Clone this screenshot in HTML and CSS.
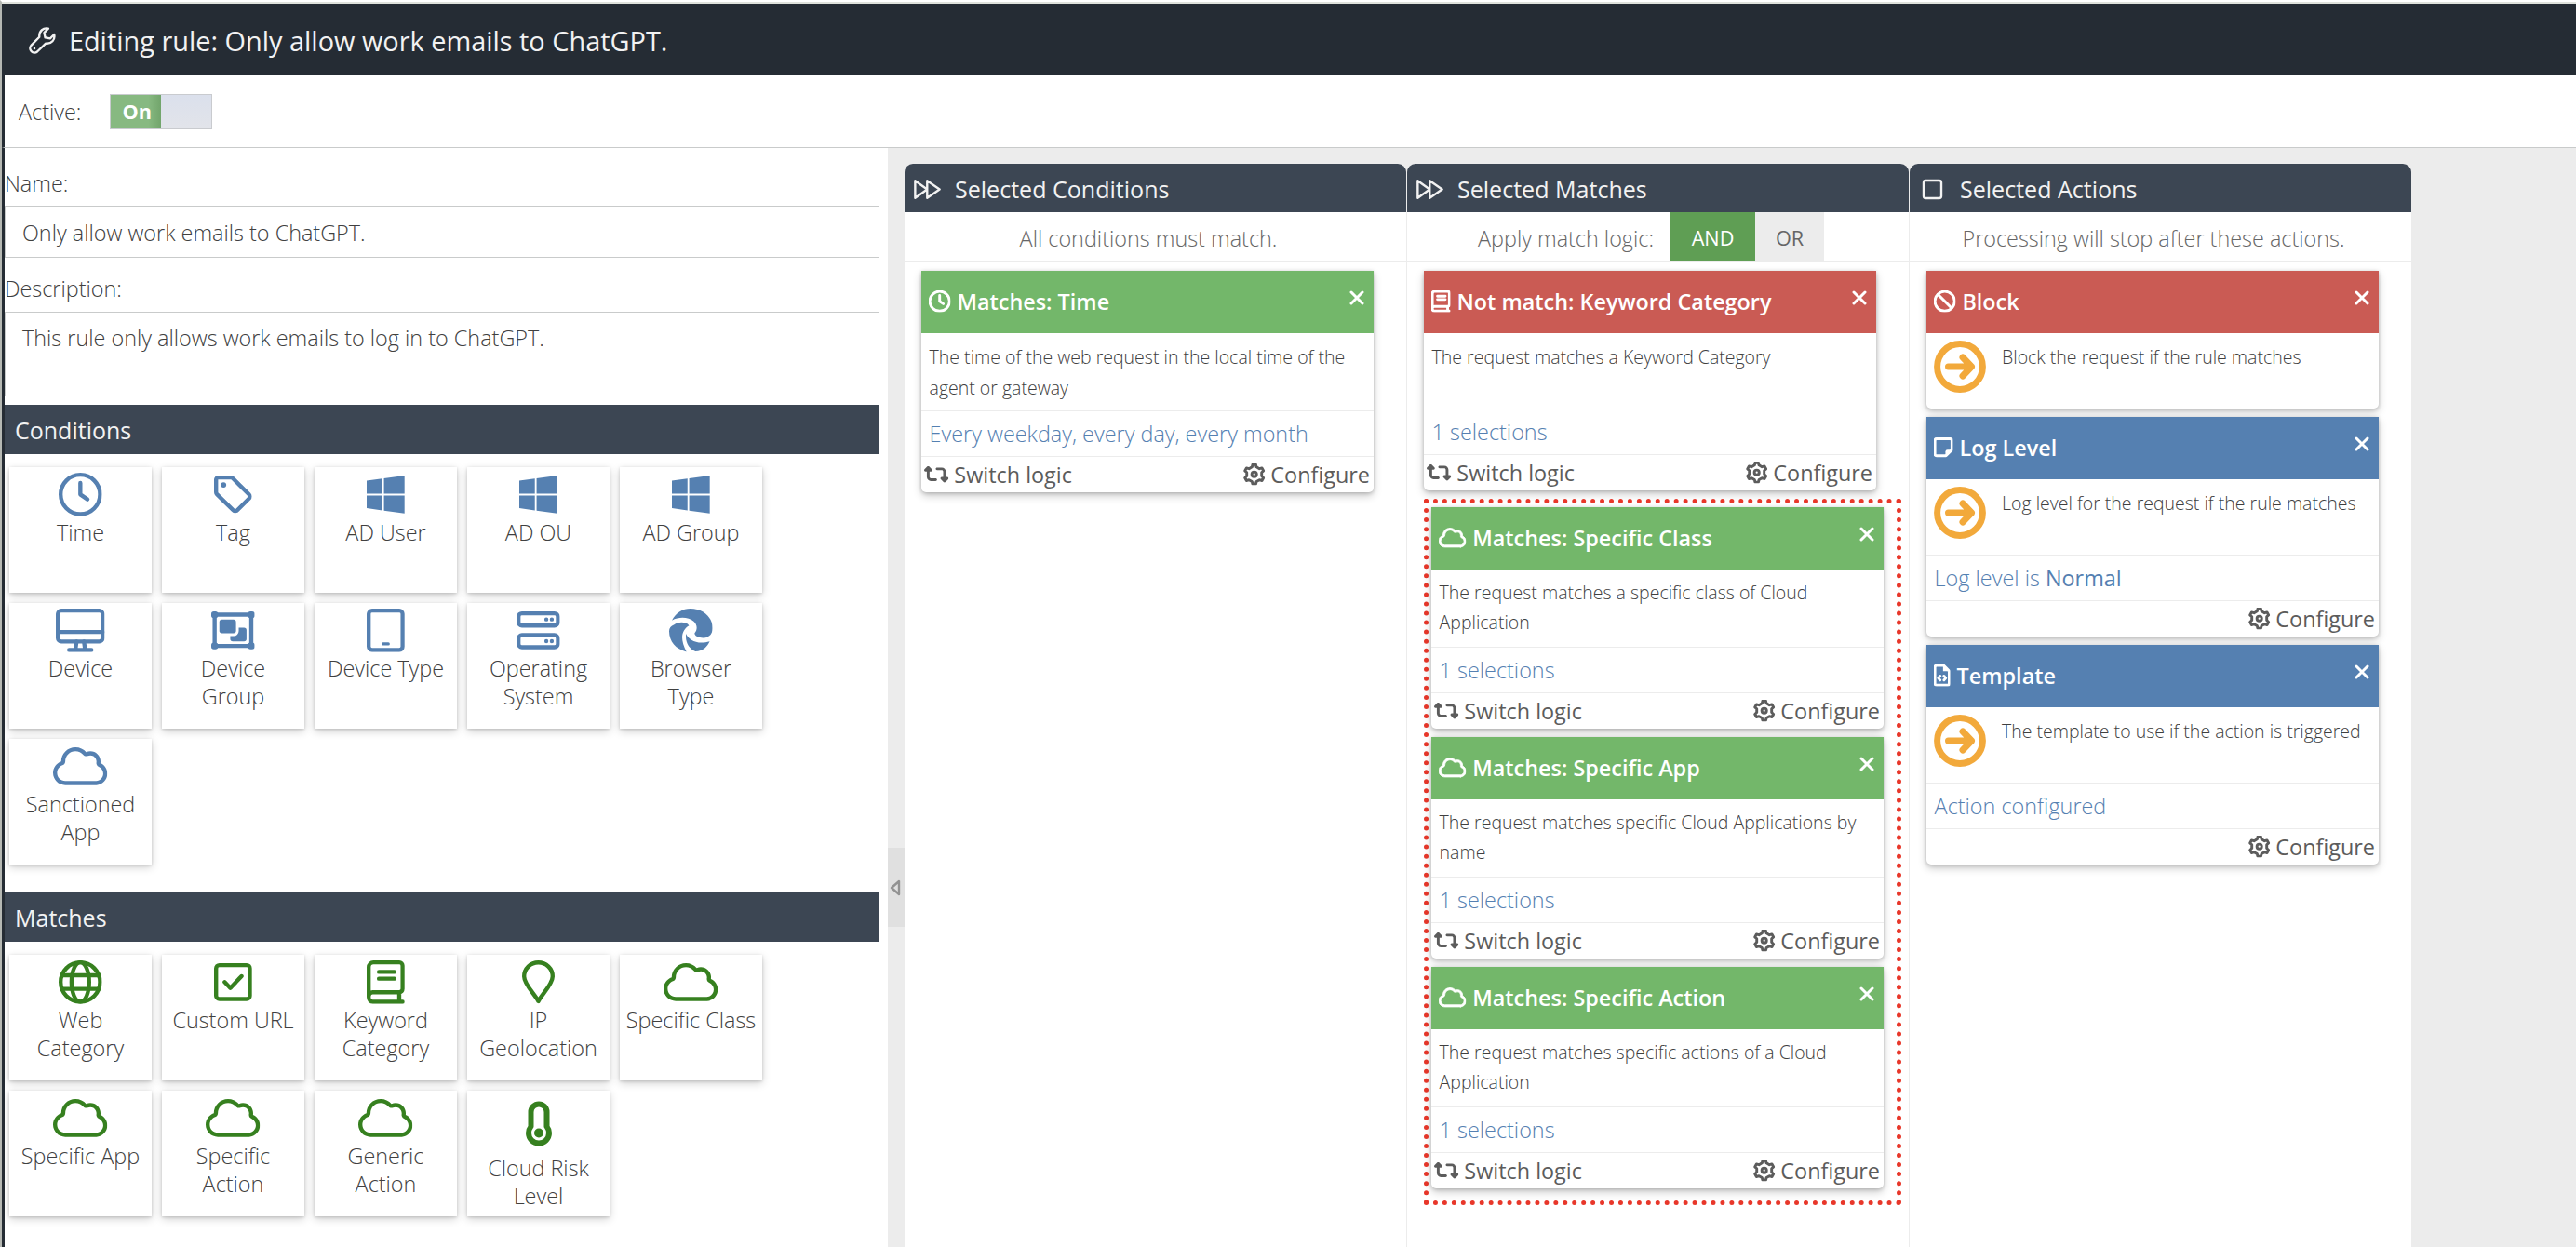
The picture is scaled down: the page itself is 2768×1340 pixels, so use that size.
FILE: index.html
```html
<!doctype html>
<html lang="en">
<head>
    <meta charset="UTF-8">
    <meta name="viewport" content="width=device-width, initial-scale=1.0">
    <title>Editing rule</title>
    <link rel="stylesheet" href="styles.css">
</head>
<body>

<svg class="sprite">
    <symbol id="i-wrench" viewBox="0 0 512 512"><path d="M370 30C280 5 190 75 200 190L42 352a84 84 0 0 0 118 118L322 312C430 330 505 240 482 142L405 218L310 200L292 108Z"/><circle class="solid" cx="106" cy="408" r="22"/></symbol>
    <symbol id="i-clock" viewBox="0 0 512 512"><circle cx="256" cy="256" r="232"/><path d="M256 120v136l85 58"/></symbol>
    <symbol id="i-tag" viewBox="0 0 448 512"><path d="M24 80a24 24 0 0 1 24-24h150c9 0 17 3 24 10l190 190a34 34 0 0 1 0 48L274 442a34 34 0 0 1-48 0L34 254a34 34 0 0 1-10-24z"/><circle class="solid" cx="112" cy="144" r="32"/></symbol>
    <symbol id="i-windows" viewBox="0 0 448 512"><path class="solid" d="M0 93.7l183.6-25.3v177.4H0V93.7zm0 324.6l183.6 25.3V268.4H0v149.9zm203.8 28L448 480V268.4H203.8v177.9zm0-380.6v180.1H448V32L203.8 65.7z"/></symbol>
    <symbol id="i-desktop" viewBox="0 0 576 512"><rect x="24" y="24" width="528" height="364" rx="40"/><path d="M24 276h528M244 390l-12 90M332 390l12 90M156 488h264"/></symbol>
    <symbol id="i-group" viewBox="0 0 512 512"><rect x="40" y="72" width="432" height="368"/><path class="solid" d="M0 62a30 30 0 0 1 30-30h20a30 30 0 0 1 30 30v20a30 30 0 0 1-30 30H30A30 30 0 0 1 0 82zM432 62a30 30 0 0 1 30-30h20a30 30 0 0 1 30 30v20a30 30 0 0 1-30 30h-20a30 30 0 0 1-30-30zM0 430a30 30 0 0 1 30-30h20a30 30 0 0 1 30 30v20a30 30 0 0 1-30 30H30a30 30 0 0 1-30-30zM432 430a30 30 0 0 1 30-30h20a30 30 0 0 1 30 30v20a30 30 0 0 1-30 30h-20a30 30 0 0 1-30-30z"/><rect class="solid" x="96" y="128" width="196" height="164" rx="30"/><path class="solid" d="M324 224h62a30 30 0 0 1 30 30v102a30 30 0 0 1-30 30H254a30 30 0 0 1-30-30v-32h40a60 60 0 0 0 60-60z"/></symbol>
    <symbol id="i-tablet" viewBox="0 0 448 512"><rect x="24" y="24" width="400" height="464" rx="40"/><path class="thin" d="M192 416h64"/></symbol>
    <symbol id="i-server" viewBox="0 0 512 512"><rect x="24" y="56" width="464" height="144" rx="40"/><rect x="24" y="312" width="464" height="144" rx="40"/><path class="solid" d="M328 128a24 24 0 1 0 48 0 24 24 0 1 0-48 0zM392 128a24 24 0 1 0 48 0 24 24 0 1 0-48 0zM328 384a24 24 0 1 0 48 0 24 24 0 1 0-48 0zM392 384a24 24 0 1 0 48 0 24 24 0 1 0-48 0z"/></symbol>
    <symbol id="i-browser" viewBox="0 0 512 512"><path class="solid" d="M33 139C80 50 160 0 250 0C400 0 512 100 512 230C512 300 470 345 400 345C350 345 298 325 300 290C335 250 335 190 290 150C230 100 120 90 33 139ZM60 190C100 155 200 150 235 200C150 250 120 350 205 510C80 480 0 390 0 267C0 230 20 205 60 190ZM200 296C230 370 330 430 478 388C450 450 400 505 310 505C240 480 185 400 200 296Z"/></symbol>
    <symbol id="i-cloud" viewBox="0 0 640 512"><path class="cloud" d="M354.9 121.7c13.8 16 36.5 21.1 55.9 12.5c8.9-3.9 18.7-6.2 29.2-6.2c39.8 0 72 32.2 72 72c0 4-.3 7.9-.9 11.7c-3.5 21.6 8.1 42.9 28.1 51.7C570.4 276.9 592 308 592 344c0 46.8-36.6 85.2-82.8 87.8c-.6 0-1.3 .1-1.9 .2H504 144c-53 0-96-43-96-96c0-41.7 26.6-77.3 64-90.5c19.2-6.8 32-24.9 32-45.3l0-.2v0 0c0-66.3 53.7-120 120-120c36.3 0 68.8 16.1 90.9 41.7zM512 480v-.2c71.4-4.1 128-63.3 128-135.8c0-55.7-33.5-103.7-81.5-124.7c1-6.3 1.5-12.8 1.5-19.3c0-66.3-53.7-120-120-120c-17.4 0-33.8 3.7-48.7 10.3C360.4 54.6 314.9 32 264 32C171.2 32 96 107.2 96 200l0 .2C40.1 220 0 273.3 0 336c0 79.5 64.5 144 144 144H464h40 8z"/></symbol>
    <symbol id="i-globe" viewBox="0 0 512 512"><circle cx="256" cy="256" r="232"/><ellipse cx="256" cy="256" rx="104" ry="232"/><path d="M40 176h432M40 336h432"/></symbol>
    <symbol id="i-check" viewBox="0 0 448 512"><rect x="24" y="56" width="400" height="400" rx="40"/><path d="M125 256l67 70 132-140"/></symbol>
    <symbol id="i-book" viewBox="0 0 448 512"><path d="M24 424V80a56 56 0 0 1 56-56h304a40 40 0 0 1 40 40v272a40 40 0 0 1-40 40H72a48 56 0 0 0 0 112h352M384 376v112M144 136h184M144 216h184"/></symbol>
    <symbol id="i-pin" viewBox="0 0 384 512"><path d="M192 482C150 400 24 280 24 188a168 164 0 0 1 336 0C360 280 234 400 192 482Z"/></symbol>
    <symbol id="i-temp" viewBox="0 0 28 48"><path class="temp" d="M5.5 11.5a8.5 8.5 0 0 1 17 0V27c1.6 2 2.5 4.3 2.5 7a11 11 0 0 1-22 0c0-2.7.9-5 2.5-7z"/><circle class="solid" cx="14" cy="34" r="5"/></symbol>
    <symbol id="i-forward" viewBox="0 0 512 512"><path d="M24 92v328l228-164zM252 92v328l236-164z"/></symbol>
    <symbol id="i-stop" viewBox="0 0 512 512"><rect x="88" y="88" width="336" height="336" rx="40"/></symbol>
    <symbol id="i-switch" viewBox="0 0 576 512"><path class="solid" d="M272 416c17.7 0 32-14.3 32-32s-14.3-32-32-32H160c-17.7 0-32-14.3-32-32V192h32c12.9 0 24.6-7.8 29.6-19.8s2.2-25.7-6.9-34.9l-64-64c-12.5-12.5-32.8-12.5-45.3 0l-64 64c-9.2 9.2-11.9 22.9-6.9 34.9s16.6 19.8 29.6 19.8l32 0 0 128c0 53 43 96 96 96l112 0zM304 96c-17.7 0-32 14.3-32 32s14.3 32 32 32l112 0c17.7 0 32 14.3 32 32l0 128-32 0c-12.9 0-24.6 7.8-29.6 19.8s-2.2 25.7 6.9 34.9l64 64c12.5 12.5 32.8 12.5 45.3 0l64-64c9.2-9.2 11.9-22.9 6.9-34.9s-16.6-19.8-29.6-19.8l-32 0V192c0-53-43-96-96-96L304 96z"/></symbol>
    <symbol id="i-gear" viewBox="0 0 512 512"><path d="M218 28L294 28L308 84L379 125L438 107L474 173L431 215L431 297L474 339L438 405L379 387L308 428L294 484L218 484L204 428L133 387L74 405L38 339L81 297L81 215L38 173L74 107L133 125L204 84Z"/><circle cx="256" cy="256" r="56"/></symbol>
    <symbol id="i-ban" viewBox="0 0 512 512"><circle cx="256" cy="256" r="232"/><path d="M96 96l320 320"/></symbol>
    <symbol id="i-note" viewBox="0 0 448 512"><path d="M24 96a40 40 0 0 1 40-40h320a40 40 0 0 1 40 40v220L284 456H64a40 40 0 0 1-40-40z"/><path class="solid" d="M272 470v-110a48 48 0 0 1 48-48h118L290 464z"/></symbol>
    <symbol id="i-file" viewBox="0 0 384 512"><path d="M24 64a40 40 0 0 1 40-40h166l130 130v294a40 40 0 0 1-40 40H64a40 40 0 0 1-40-40zM146 272l-40 48 40 48M238 272l40 48-40 48"/><path class="solid" d="M216 10v150h150z"/></symbol>
    <symbol id="i-arrow" viewBox="0 0 56 56"><g class="arrow"><circle cx="28" cy="28" r="24.4"/><path d="M15.5 28h25M31 18l9.5 10L31 38"/></g></symbol>
    <symbol id="i-close" viewBox="0 0 16 16"><path class="cross" d="M2 2l12 12M14 2L2 14"/></symbol>
    <symbol id="i-collapse" viewBox="0 0 12 18"><path class="collapse" d="M10 2v14L2 9z"/></symbol>
</svg>

<div class="page">
    <header class="title-bar">
        <svg class="icon"><use href="#i-wrench"/></svg>
        <span>Editing rule: Only allow work emails to ChatGPT.</span>
    </header>

    <div class="toolbar">
        <span>Active:</span>
        <div class="toggle"><span class="toggle-on">On</span></div>
    </div>

    <main class="editor">
        <section class="sidebar">
            <label for="name">Name:</label>
            <div class="field" id="name">Only allow work emails to ChatGPT.</div>
            <label for="description">Description:</label>
            <div class="field area" id="description">This rule only allows work emails to log in to ChatGPT.</div>

            <h2>Conditions</h2>
            <div class="tiles blue">
                <div class="tile"><svg class="icon"><use href="#i-clock"/></svg>Time</div>
                <div class="tile"><svg class="icon w448"><use href="#i-tag"/></svg>Tag</div>
                <div class="tile"><svg class="icon w448"><use href="#i-windows"/></svg>AD User</div>
                <div class="tile"><svg class="icon w448"><use href="#i-windows"/></svg>AD OU</div>
                <div class="tile"><svg class="icon w448"><use href="#i-windows"/></svg>AD Group</div>
                <div class="tile"><svg class="icon w576"><use href="#i-desktop"/></svg>Device</div>
                <div class="tile"><svg class="icon"><use href="#i-group"/></svg>Device<br>Group</div>
                <div class="tile"><svg class="icon w448"><use href="#i-tablet"/></svg>Device Type</div>
                <div class="tile"><svg class="icon"><use href="#i-server"/></svg>Operating<br>System</div>
                <div class="tile"><svg class="icon"><use href="#i-browser"/></svg>Browser<br>Type</div>
                <div class="tile"><svg class="icon w640"><use href="#i-cloud"/></svg>Sanctioned<br>App</div>
            </div>

            <h2>Matches</h2>
            <div class="tiles green">
                <div class="tile"><svg class="icon"><use href="#i-globe"/></svg>Web<br>Category</div>
                <div class="tile"><svg class="icon w448"><use href="#i-check"/></svg>Custom URL</div>
                <div class="tile"><svg class="icon w448"><use href="#i-book"/></svg>Keyword<br>Category</div>
                <div class="tile"><svg class="icon w384"><use href="#i-pin"/></svg>IP<br>Geolocation</div>
                <div class="tile"><svg class="icon w640"><use href="#i-cloud"/></svg>Specific Class</div>
                <div class="tile"><svg class="icon w640"><use href="#i-cloud"/></svg>Specific App</div>
                <div class="tile"><svg class="icon w640"><use href="#i-cloud"/></svg>Specific<br>Action</div>
                <div class="tile"><svg class="icon w640"><use href="#i-cloud"/></svg>Generic<br>Action</div>
                <div class="tile"><svg class="icon temperature"><use href="#i-temp"/></svg>Cloud Risk<br>Level</div>
            </div>
        </section>

        <div class="splitter">
            <div class="splitter-handle"><svg><use href="#i-collapse"/></svg></div>
        </div>

        <section class="column">
            <h3><svg class="icon"><use href="#i-forward"/></svg>Selected Conditions</h3>
            <div class="hint">All conditions must match.</div>
            <div class="cards">
                <article class="card match">
                    <h4><svg class="icon"><use href="#i-clock"/></svg>Matches: Time<svg class="close"><use href="#i-close"/></svg></h4>
                    <p>The time of the web request in the local time of the agent or gateway</p>
                    <div class="value">Every weekday, every day, every month</div>
                    <footer><span><svg class="icon w576"><use href="#i-switch"/></svg>Switch logic</span><span><svg class="icon"><use href="#i-gear"/></svg>Configure</span></footer>
                </article>
            </div>
        </section>

        <section class="column">
            <h3><svg class="icon"><use href="#i-forward"/></svg>Selected Matches</h3>
            <div class="hint">Apply match logic:<span class="logic and">AND</span><span class="logic or">OR</span></div>
            <div class="cards">
                <article class="card not-match">
                    <h4><svg class="icon w448"><use href="#i-book"/></svg>Not match: Keyword Category<svg class="close"><use href="#i-close"/></svg></h4>
                    <p>The request matches a Keyword Category</p>
                    <div class="value">1 selections</div>
                    <footer><span><svg class="icon w576"><use href="#i-switch"/></svg>Switch logic</span><span><svg class="icon"><use href="#i-gear"/></svg>Configure</span></footer>
                </article>
                <div class="highlight">
                    <article class="card match">
                        <h4><svg class="icon w640"><use href="#i-cloud"/></svg>Matches: Specific Class<svg class="close"><use href="#i-close"/></svg></h4>
                        <p>The request matches a specific class of Cloud Application</p>
                        <div class="value">1 selections</div>
                        <footer><span><svg class="icon w576"><use href="#i-switch"/></svg>Switch logic</span><span><svg class="icon"><use href="#i-gear"/></svg>Configure</span></footer>
                    </article>
                    <article class="card match">
                        <h4><svg class="icon w640"><use href="#i-cloud"/></svg>Matches: Specific App<svg class="close"><use href="#i-close"/></svg></h4>
                        <p>The request matches specific Cloud Applications by name</p>
                        <div class="value">1 selections</div>
                        <footer><span><svg class="icon w576"><use href="#i-switch"/></svg>Switch logic</span><span><svg class="icon"><use href="#i-gear"/></svg>Configure</span></footer>
                    </article>
                    <article class="card match">
                        <h4><svg class="icon w640"><use href="#i-cloud"/></svg>Matches: Specific Action<svg class="close"><use href="#i-close"/></svg></h4>
                        <p>The request matches specific actions of a Cloud Application</p>
                        <div class="value">1 selections</div>
                        <footer><span><svg class="icon w576"><use href="#i-switch"/></svg>Switch logic</span><span><svg class="icon"><use href="#i-gear"/></svg>Configure</span></footer>
                    </article>
                </div>
            </div>
        </section>

        <section class="column">
            <h3><svg class="icon"><use href="#i-stop"/></svg>Selected Actions</h3>
            <div class="hint">Processing will stop after these actions.</div>
            <div class="cards">
                <article class="card not-match">
                    <h4><svg class="icon"><use href="#i-ban"/></svg>Block<svg class="close"><use href="#i-close"/></svg></h4>
                    <p class="action"><svg><use href="#i-arrow"/></svg>Block the request if the rule matches</p>
                </article>
                <article class="card option">
                    <h4><svg class="icon w448"><use href="#i-note"/></svg>Log Level<svg class="close"><use href="#i-close"/></svg></h4>
                    <p class="action"><svg><use href="#i-arrow"/></svg>Log level for the request if the rule matches</p>
                    <div class="value">Log level is <b>Normal</b></div>
                    <footer><span></span><span><svg class="icon"><use href="#i-gear"/></svg>Configure</span></footer>
                </article>
                <article class="card option">
                    <h4><svg class="icon w384"><use href="#i-file"/></svg>Template<svg class="close"><use href="#i-close"/></svg></h4>
                    <p class="action"><svg><use href="#i-arrow"/></svg>The template to use if the action is triggered</p>
                    <div class="value">Action configured</div>
                    <footer><span></span><span><svg class="icon"><use href="#i-gear"/></svg>Configure</span></footer>
                </article>
            </div>
        </section>
    </main>
</div>
</body>
</html>
```

FILE: styles.css
```css
* {
    box-sizing: border-box;
}

body {
    margin: 0;
    height: 1340px;
    overflow: hidden;
    background-color: #ececec;
    font-family: "Open Sans", sans-serif;
    font-size: 23.4px;
    font-weight: 300;
    line-height: 30px;
    color: #404040;
}

h2, h3, h4, p {
    margin: 0;
    font-weight: 400;
}

/* icons */
.sprite {
    display: none;
}

.icon {
    width: 1em;
    height: 1em;
    flex: none;
    fill: none;
    stroke: currentColor;
    stroke-width: 48;
    stroke-linecap: round;
    stroke-linejoin: round;
}

.w384 { width: .75em; }
.w448 { width: .875em; }
.w576 { width: 1.125em; }
.w640 { width: 1.25em; }

.solid {
    fill: currentColor;
    stroke: none;
}

.cloud {
    fill: currentColor;
    stroke-width: var(--cloud-stroke, 0);
}

.thin {
    stroke-width: 34;
}

.temp {
    stroke-width: 6;
}

/* page frame */
.page {
    display: flex;
    flex-direction: column;
    height: 1340px;
    border-left: 2px solid #b5b8b3;
    border-top: 2px solid #fff;
}

.title-bar {
    display: flex;
    flex: none;
    align-items: center;
    gap: 14px;
    height: 79px;
    padding: 2px 0 0 29px;
    border-top: 2px solid #dfe2dc;
    background-color: #252c34;
    color: #f2f2f2;
    font-size: 28.9px;
    font-weight: 400;
}

.title-bar .icon {
    stroke-width: 42;
}

.toolbar {
    display: flex;
    flex: none;
    align-items: center;
    height: 78px;
    padding-left: 15px;
    border-left: 3px solid #252c34;
    border-bottom: 1px solid #c9cbcb;
    background-color: #fff;
}

.toggle {
    display: flex;
    width: 110px;
    height: 38px;
    margin-left: 31px;
    border: 1px solid #c9cbcf;
    background: linear-gradient(#dbe0ec, #e2e4ea);
}

.toggle-on {
    width: 54px;
    padding-left: 12px;
    line-height: 36px;
    background: linear-gradient(to right, #87b981 75%, #72a56c);
    color: #fff;
    font-size: 21.67px;
    font-weight: 700;
}

.editor {
    display: flex;
    flex: 1;
    min-height: 0;
    border-left: 3px solid #252c34;
}

/* left side */
.sidebar {
    width: 949px;
    padding: 23px 9px 0 0;
    background-color: #fff;
}

.sidebar label {
    display: block;
}

.field {
    height: 56px;
    margin: 9px 0 18px;
    padding: 13px 18px;
    border: 1px solid #c9cbcb;
}

.area {
    height: 91px;
    margin: 10px 0 9px;
    padding-top: 12px;
    border-bottom: none;
}

.sidebar h2 {
    height: 53px;
    padding-left: 11px;
    background-color: #3c4653;
    color: #f2f2f2;
    font-size: 25px;
    line-height: 54px;
}

.tiles {
    display: grid;
    grid-template-columns: repeat(5, 153px);
    grid-auto-rows: 135px;
    gap: 11px;
    padding: 14px 0 30px 5px;
}

.tile {
    padding-top: 6px;
    background-color: #fff;
    box-shadow: 0 3px 9px rgba(0, 0, 0, .18), 0 1px 3px rgba(0, 0, 0, .16);
    text-align: center;
}

.tile .icon {
    display: block;
    margin: 0 auto 2px;
    font-size: 46.67px;
}

.blue .icon {
    color: #5580b1;
}

.green .icon {
    color: #36801f;
}

.tile .temperature {
    width: 28px;
    height: 49px;
    margin: 5px auto 8px;
}

.splitter {
    width: 18px;
    padding-top: 752px;
}

.splitter-handle {
    display: flex;
    align-items: center;
    height: 85px;
    padding-left: 2px;
    background-color: #e0e0e0;
}

.splitter-handle svg {
    width: 12px;
    height: 18px;
}

.collapse {
    fill: none;
    stroke: #929292;
    stroke-width: 2.4;
    stroke-linejoin: round;
}

/* selected columns */
.column {
    width: 540px;
    margin-top: 17px;
    border-right: 1px solid #ececec;
}

.column h3 {
    display: flex;
    align-items: center;
    gap: 15px;
    height: 52px;
    padding: 2px 0 0 10px;
    border-radius: 9px 9px 0 0;
    background-color: #3c4653;
    color: #f2f2f2;
    font-size: 25.05px;
}

.column h3 .icon {
    width: 29px;
    height: 29px;
    stroke-width: 42;
}

.hint {
    display: flex;
    justify-content: center;
    height: 54px;
    padding-right: 15px;
    border-bottom: 1px solid #ececec;
    background-color: #fff;
    color: #666;
    line-height: 57px;
}

.logic {
    height: 53px;
    font-size: 21.67px;
    font-weight: 400;
    line-height: 56px;
    text-align: center;
}

.and {
    width: 91px;
    margin-left: 18px;
    background-color: #5f9e54;
    color: #fff;
}

.or {
    width: 74px;
    background-color: #ececec;
}

.cards {
    height: 1100px;
    padding: 9px 8px 0 18px;
    background-color: #fff;
}

.card {
    width: 486px;
    margin-bottom: 9px;
    border-radius: 0 0 5px 5px;
    background-color: #fff;
    box-shadow: 0 4px 10px rgba(0, 0, 0, .2), 0 1px 4px rgba(0, 0, 0, .2);
}

.card h4 {
    display: flex;
    align-items: center;
    gap: 7px;
    height: 67px;
    padding: 0 0 1px 8px;
    color: #fff;
    font-weight: 600;
}

.match h4 { background-color: #73b76a; }
.not-match h4 { background-color: #ca5b54; }
.option h4 { background-color: #5580b1; }

.card .icon {
    --cloud-stroke: 18;
    overflow: visible;
    stroke-width: 64;
}

.close {
    width: 16px;
    height: 16px;
    margin: -8px 10px 0 auto;
}

.cross {
    stroke: #fff;
    stroke-width: 3;
    stroke-linecap: round;
}

.card p {
    min-height: 81px;
    padding: 9px 15px 8px 8.6px;
    font-size: 19.5px;
    font-weight: 300;
    line-height: 33px;
}

.highlight .card p {
    height: 83px;
    line-height: 32px;
}

.card .action {
    display: flex;
    gap: 17px;
    padding-left: 8px;
}

.action svg {
    flex: none;
    width: 56px;
    height: 56px;
    margin-top: -1px;
}

.arrow {
    fill: none;
    stroke: #f2a93b;
    stroke-width: 7;
    stroke-linecap: round;
    stroke-linejoin: round;
}

.value {
    height: 49px;
    padding: 9px 8px 0 8.6px;
    border-top: 1px solid #ececec;
    color: #5580b1;
}

.value b {
    font-weight: 400;
}

.card footer {
    display: flex;
    justify-content: space-between;
    height: 39px;
    padding: 0 4px 0 3px;
    border-top: 1px solid #ececec;
    color: #5c5c5c;
    font-weight: 400;
    line-height: 39px;
}

.card footer span {
    display: flex;
    align-items: center;
    gap: 6px;
}

.highlight {
    padding: 4px 3px;
    border: 5px dotted #e8372a;
}
```
